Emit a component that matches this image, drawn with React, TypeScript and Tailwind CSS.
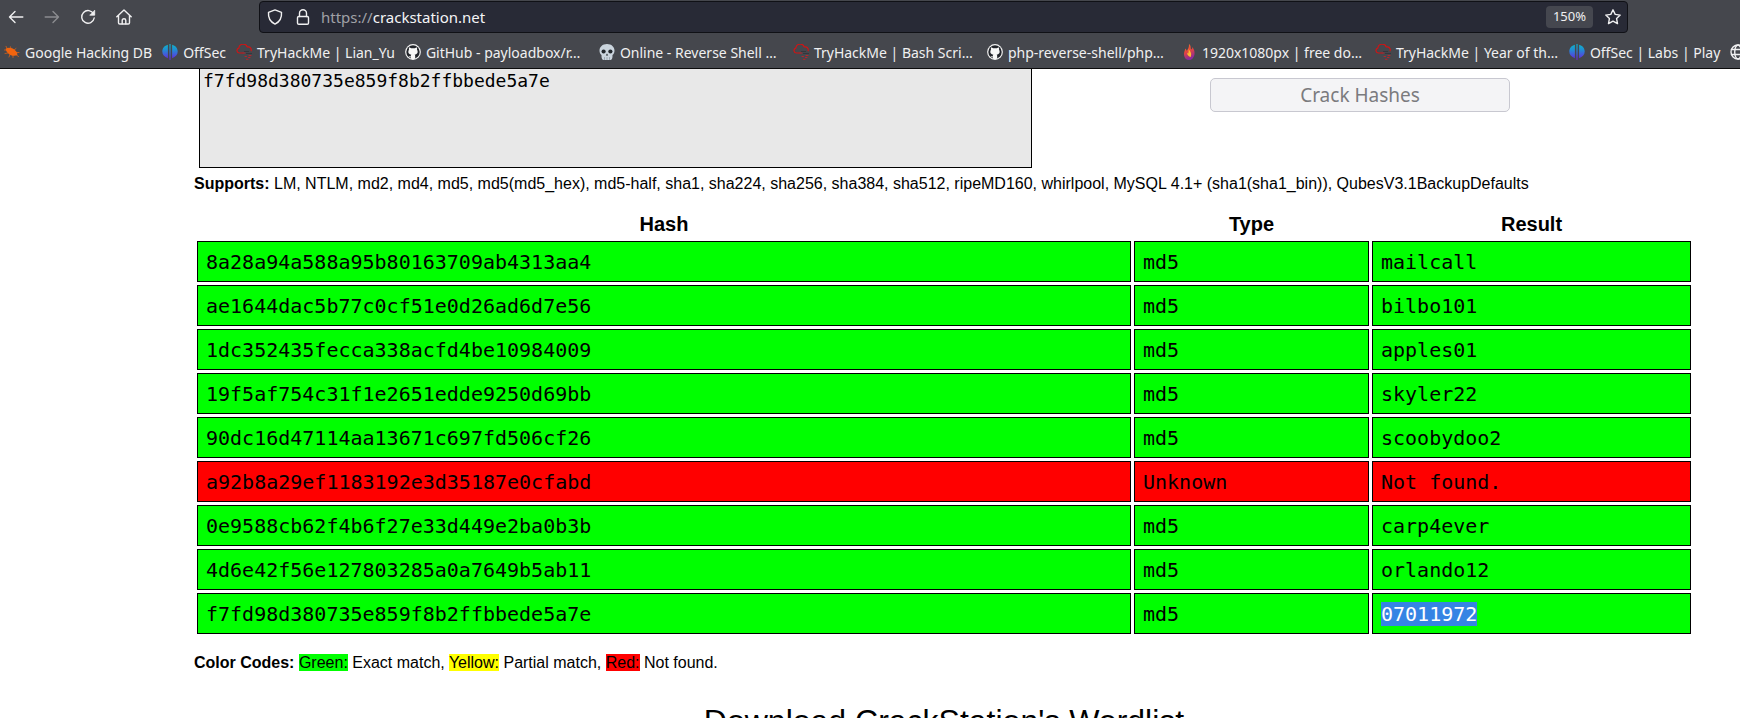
import React from "react";
import type { ReactNode } from "react";

const Glyph = ({ children, className = "size-4" }: { children: ReactNode; className?: string }) => (
  <svg viewBox="0 0 16 16" aria-hidden="true" className={`${className} shrink-0`} fill="none" stroke="currentColor" strokeWidth="1.4" strokeLinecap="round" strokeLinejoin="round">
    {children}
  </svg>
);

const BackIcon = () => (
  <Glyph><path d="M14.800 8H1.500M7 2.500 1.500 8 7 13.500" /></Glyph>
);
const ForwardIcon = () => (
  <Glyph><path d="M1.200 8h13.300M9 2.500 14.500 8 9 13.500" /></Glyph>
);
const ReloadIcon = () => (
  <Glyph>
    <path d="M13.600 5A6.300 6.300 0 1 0 14.200 9" />
    <path d="M14.700 1.600v4.600h-4.600z" fill="currentColor" strokeWidth="0.800" />
  </Glyph>
);
const HomeIcon = () => (
  <Glyph>
    <path d="M.8 7.800 8 .9l7.200 6.900M2.500 6.500v7.200c0 .8.500 1.300 1.300 1.300h8.400c.8 0 1.300-.5 1.300-1.300V6.500" />
    <path d="M6.200 14.800v-3.300a1.800 1.800 0 0 1 3.600 0v3.300" />
  </Glyph>
);
const ShieldIcon = () => (
  <Glyph><path d="M8 .9 14.500 3.300c.4 4.700-1.500 9.500-6.500 11.800C3 12.800 1.100 8 1.500 3.300z" /></Glyph>
);
const LockIcon = () => (
  <Glyph>
    <rect x="2.500" y="7.500" width="11" height="7.700" rx="1.300" />
    <path d="M4.500 7.500V4.300a3.500 3.500 0 0 1 7 0v3.200" />
  </Glyph>
);
const StarIcon = () => (
  <Glyph><path d="m8 .8 2.200 4.600 5 .7-3.600 3.500.9 5L8 12.200l-4.500 2.400.9-5L.8 6.100l5-.7z" /></Glyph>
);
const GlobeIcon = () => (
  <Glyph>
    <circle cx="8" cy="8" r="7" />
    <ellipse cx="8" cy="8" rx="3.300" ry="7" />
    <path d="M1.500 5.500h13M1.500 10.500h13" />
  </Glyph>
);
const BugIcon = () => (
  <Glyph>
    <path d="M1.800 4.500c3-1.200 6.500-.8 9 1.500 2 1.500 2.800 3.300 2.500 5-2.500 1.500-6.800.8-9-1.500C2.600 8 1.500 6 1.800 4.500z" fill="#f0640f" stroke="none" />
    <path d="M3.500 5 2 2.300M7 5 6.500 2.800M10 6l2-1.500M12 8.500h3M4 9l-3 .5M6 10.500 5 13M9 11.500v2M12.500 11l2 1.500M2 6H.5" stroke="#f0640f" strokeWidth="0.700" />
  </Glyph>
);
const OffSecIcon = ({ id }: { id: string }) => (
  <Glyph>
    <defs>
      <linearGradient id={id} gradientUnits="userSpaceOnUse" x1="0" y1="0" x2="0" y2="16">
        <stop offset="0" stopColor="#0fb4c6" />
        <stop offset="0.350" stopColor="#1f8fd2" />
        <stop offset="0.700" stopColor="#4a52dc" />
        <stop offset="1" stopColor="#6a20c8" />
      </linearGradient>
    </defs>
    <path d="M7.400 0h1.200v16H7.400zM5.900.8v13.400C2.300 12.800.3 10.700.3 7.600.3 4.200 2.500 1.600 5.900.8zM10.100.8v13.400c3.600-1.400 5.600-3.500 5.600-6.600 0-3.400-2.200-6-5.600-6.800z" fill={`url(#${id})`} stroke="none" />
  </Glyph>
);
const CloudIcon = () => (
  <Glyph>
    <path d="M7 9H3.300A2.500 2.500 0 0 1 2.800 4.100 4.400 4.400 0 0 1 11.300 3a3 3 0 0 1 3.800 3.800" stroke="#d01414" strokeWidth="1.200" />
    <path d="M8.500 7.500h4M10.500 9.500h5" stroke="#34373d" strokeWidth="1.200" />
    <path d="M7 9h2M13 11.500h2M9 12.500h1.500M12.500 13.500h1.500M10.500 15.300h1.500" stroke="#b8242a" strokeWidth="1" />
  </Glyph>
);
const GitHubIcon = () => (
  <Glyph>
    <circle cx="8" cy="8" r="7.900" fill="#f4f4f4" stroke="none" />
    <circle cx="8" cy="8" r="6.700" fill="#22252b" stroke="none" />
    <path d="M4.300 3.200 6.200 4.200h3.600l1.900-1c.5 1 .5 1.600.3 2.200 1.400 2.500.5 4.800-2.300 5.200.4.500.5 1 .5 1.700v2.500a7 7 0 0 1-4.400 0v-1.600c-1.300.2-1.800-.3-2.300-1.200 1 .4 1.500.6 2.300.2 0-.7.200-1.200.5-1.600-2.800-.4-3.700-2.700-2.300-5.200-.2-.6-.2-1.200.3-2.200z" fill="#f8f8f8" stroke="none" />
  </Glyph>
);
const SkullIcon = () => (
  <Glyph>
    <path d="M8 0c4.500 0 7.500 2.800 7.500 6.800 0 1.900-.8 3.200-2 4.200v1.500c0 1.800-.8 3.500-2.200 3.500H4.700c-1.400 0-2.200-1.700-2.200-3.500V11c-1.200-1-2-2.300-2-4.200C.5 2.800 3.500 0 8 0z" fill="#cbd5de" stroke="none" />
    <circle cx="4.600" cy="7.500" r="2.100" fill="#22272c" stroke="none" />
    <circle cx="11.400" cy="7.500" r="2.100" fill="#22272c" stroke="none" />
    <path d="m8 9.500-1.200 2h2.400z" fill="#22272c" stroke="none" />
    <path d="M5.500 13.500v2M8 13.500v2M10.500 13.500v2" stroke="#87929d" strokeWidth="0.700" />
  </Glyph>
);
const FlameIcon = () => (
  <Glyph>
    <defs>
      <linearGradient id="flame" x1="0" y1="0" x2="0.300" y2="1">
        <stop offset="0" stopColor="#f4742b" />
        <stop offset="0.500" stopColor="#e8453c" />
        <stop offset="1" stopColor="#8a2a9d" />
      </linearGradient>
    </defs>
    <path d="M8 0c2.600 2 1.200 4.200 2.200 5.500 1-.4 1.200-1.500 1.200-2.500 1.800 2.500 2.600 5 2 8-.8 3-2.700 5-5.400 5s-4.600-2-5-5c-.3-2.500.8-4 1.300-6.500.7.700 1 1.300 1.400 2.200C7 5 8.200 3.500 8 0z" fill="url(#flame)" stroke="none" />
    <path d="M7.500 5c2 2.500 3.500 4.500 2.200 8C7.800 12.500 6 11 6 8.500c.6.500.9.900 1.100 1.300.6-1.300.6-3.300.4-4.800z" fill="#fdbb2d" stroke="none" />
  </Glyph>
);

const bookmarks: { label: string; icon: ReactNode; capped?: boolean }[] = [
  { label: "Google Hacking DB", icon: <BugIcon /> },
  { label: "OffSec", icon: <OffSecIcon id="offsec-home" /> },
  { label: "TryHackMe | Lian_Yu", icon: <CloudIcon /> },
  { label: "GitHub - payloadbox/r…", icon: <GitHubIcon />, capped: true },
  { label: "Online - Reverse Shell …", icon: <SkullIcon />, capped: true },
  { label: "TryHackMe | Bash Scri…", icon: <CloudIcon />, capped: true },
  { label: "php-reverse-shell/php…", icon: <GitHubIcon />, capped: true },
  { label: "1920x1080px | free do…", icon: <FlameIcon />, capped: true },
  { label: "TryHackMe | Year of th…", icon: <CloudIcon />, capped: true },
  { label: "OffSec | Labs | Play", icon: <OffSecIcon id="offsec-labs" /> },
];

type Row = { hash: string; type: string; result: string; found: boolean; selected?: boolean };

const rows: Row[] = [
  { hash: "8a28a94a588a95b80163709ab4313aa4", type: "md5", result: "mailcall", found: true },
  { hash: "ae1644dac5b77c0cf51e0d26ad6d7e56", type: "md5", result: "bilbo101", found: true },
  { hash: "1dc352435fecca338acfd4be10984009", type: "md5", result: "apples01", found: true },
  { hash: "19f5af754c31f1e2651edde9250d69bb", type: "md5", result: "skyler22", found: true },
  { hash: "90dc16d47114aa13671c697fd506cf26", type: "md5", result: "scoobydoo2", found: true },
  { hash: "a92b8a29ef1183192e3d35187e0cfabd", type: "Unknown", result: "Not found.", found: false },
  { hash: "0e9588cb62f4b6f27e33d449e2ba0b3b", type: "md5", result: "carp4ever", found: true },
  { hash: "4d6e42f56e127803285a0a7649b5ab11", type: "md5", result: "orlando12", found: true },
  { hash: "f7fd98d380735e859f8b2ffbbede5a7e", type: "md5", result: "07011972", found: true, selected: true },
];

function BrowserChrome() {
  return (
    <header className="border-b border-[#0c0c0d] bg-[#45474d] font-['Noto_Sans',sans-serif] text-[#f0f0f1]">
      <div className="flex h-[34px] items-center pr-28">
        <nav aria-label="Navigation" className="flex w-[259px] shrink-0 items-center gap-5 pl-2">
          <button type="button" aria-label="Back"><BackIcon /></button>
          <button type="button" aria-label="Forward" disabled className="text-[#8b8c90]"><ForwardIcon /></button>
          <button type="button" aria-label="Reload"><ReloadIcon /></button>
          <button type="button" aria-label="Home"><HomeIcon /></button>
        </nav>
        <div className="flex h-8 flex-1 items-center rounded border border-[#101116] bg-[#282a36] pr-1.5 pl-[7px]">
          <ShieldIcon />
          <span className="w-3" />
          <LockIcon />
          <a href="#" className="ml-2.5 flex-1 text-[15px] text-[#f5f5f6]">
            <span className="text-[#a0a1a6]">https://</span>crackstation.net
          </a>
          <button type="button" className="h-[22px] rounded-sm bg-[#45474f] px-[7px] text-[13px]">150%</button>
          <button type="button" aria-label="Bookmark this page" className="ml-3"><StarIcon /></button>
        </div>
      </div>
      <nav aria-label="Bookmarks" className="flex h-[34px] items-center gap-2.5 overflow-hidden pt-0.5 pl-1 text-[14px] whitespace-nowrap">
        {bookmarks.map((b) => (
          <a key={b.label} href="#" className={b.capped ? "flex w-46 shrink-0 items-center gap-[5px]" : "flex shrink-0 items-center gap-[5px]"}>
            {b.icon}
            {b.label}
          </a>
        ))}
        <a href="#" aria-label="Website" className="shrink-0"><GlobeIcon /></a>
      </nav>
    </header>
  );
}

export default function App() {
  return (
    <div className="h-screen overflow-hidden bg-white font-['Liberation_Sans',Arial,sans-serif] text-black">
      <BrowserChrome />
      <main className="pr-[46px] pl-[194px]">
        <form className="flex pl-[5px]" onSubmit={(e) => e.preventDefault()}>
          <textarea
            aria-label="Hashes"
            className="h-[99px] w-[833px] resize-none border border-t-0 border-black bg-[#e8e8e8] px-[3px] font-['DejaVu_Sans_Mono',monospace] text-[18px] leading-6"
            defaultValue="f7fd98d380735e859f8b2ffbbede5a7e"
          />
          <div className="flex flex-1 justify-center pt-[9px] pr-1.5">
            <button type="submit" disabled className="h-[34px] w-[300px] rounded-[5px] border border-[#c8c8d0] bg-[#f4f4f6] font-['Noto_Sans',sans-serif] text-[19px] leading-none text-[#7b7b7e]">
              Crack Hashes
            </button>
          </div>
        </form>
        <p className="mt-1.5 text-[16px] leading-5">
          <strong>Supports:</strong> LM, NTLM, md2, md4, md5, md5(md5_hex), md5-half, sha1, sha224, sha256, sha384, sha512, ripeMD160, whirlpool, MySQL 4.1+ (sha1(sha1_bin)), QubesV3.1BackupDefaults
        </p>
        <table className="mt-[13px] w-full table-fixed border-separate border-spacing-[3px] text-[20px]">
          <colgroup>
            <col />
            <col className="w-[235px]" />
            <col className="w-[319px]" />
          </colgroup>
          <thead>
            <tr>
              <th scope="col" className="h-7 leading-6">Hash</th>
              <th scope="col" className="h-7 leading-6">Type</th>
              <th scope="col" className="h-7 leading-6">Result</th>
            </tr>
          </thead>
          <tbody className="font-['DejaVu_Sans_Mono',monospace]">
            {rows.map((r) => (
              <tr key={r.hash} className={r.found ? "bg-[#00ff00]" : "bg-[#ff0000]"}>
                <td className="h-[41px] border border-black px-2 leading-6">{r.hash}</td>
                <td className="h-[41px] border border-black px-2 leading-6">{r.type}</td>
                <td className="h-[41px] border border-black px-2 leading-6">
                  {r.selected ? <span className="bg-[#3584e4] text-white">{r.result}</span> : r.result}
                </td>
              </tr>
            ))}
          </tbody>
        </table>
        <p className="mt-4 text-[16px] leading-5">
          <strong>Color Codes:</strong> <span className="bg-[#00ff00]">Green:</span> Exact match,{" "}
          <span className="bg-[#ffff00]">Yellow:</span> Partial match, <span className="bg-[#ff0000]">Red:</span> Not found.
        </p>
        <h2 className="mt-7 text-center text-[32px] leading-10">Download CrackStation's Wordlist</h2>
      </main>
    </div>
  );
}
